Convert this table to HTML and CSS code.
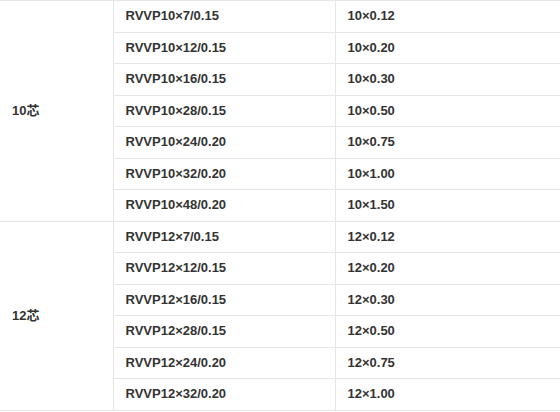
FILE: index.html
```html
<!DOCTYPE html>
<html>
<head>
<meta charset="utf-8">
<link rel="stylesheet" href="styles.css">
</head>
<body>
<table class="spec">
  <colgroup>
    <col class="c1"><col class="c2"><col class="c3">
  </colgroup>
  <tbody>
    <tr><td class="core" rowspan="7">10芯</td><td>RVVP10×7/0.15</td><td>10×0.12</td></tr>
    <tr><td>RVVP10×12/0.15</td><td>10×0.20</td></tr>
    <tr><td>RVVP10×16/0.15</td><td>10×0.30</td></tr>
    <tr><td>RVVP10×28/0.15</td><td>10×0.50</td></tr>
    <tr><td>RVVP10×24/0.20</td><td>10×0.75</td></tr>
    <tr><td>RVVP10×32/0.20</td><td>10×1.00</td></tr>
    <tr><td>RVVP10×48/0.20</td><td>10×1.50</td></tr>
    <tr><td class="core" rowspan="6">12芯</td><td>RVVP12×7/0.15</td><td>12×0.12</td></tr>
    <tr><td>RVVP12×12/0.15</td><td>12×0.20</td></tr>
    <tr><td>RVVP12×16/0.15</td><td>12×0.30</td></tr>
    <tr><td>RVVP12×28/0.15</td><td>12×0.50</td></tr>
    <tr><td>RVVP12×24/0.20</td><td>12×0.75</td></tr>
    <tr><td>RVVP12×32/0.20</td><td>12×1.00</td></tr>
  </tbody>
</table>
</body>
</html>
```

FILE: styles.css
```css
html, body {
  margin: 0;
  padding: 0;
  background: #ffffff;
}

.spec {
  border-collapse: collapse;
  table-layout: fixed;
  width: 560px;
  font-family: "Liberation Sans", Arial, "Noto Sans CJK SC", sans-serif;
  font-size: 13px;
  font-weight: bold;
  color: #333333;
}

.c1 { width: 113px; }
.c2 { width: 222px; }
.c3 { width: 225px; }

.spec td {
  border: 1px solid #e6e6e6;
  height: 31.5px;
  padding: 0 0 0 12px;
  vertical-align: middle;
  line-height: 16px;
  box-sizing: border-box;
}

.spec td.core {
  border-left: none;
  padding-left: 12px;
}
```
